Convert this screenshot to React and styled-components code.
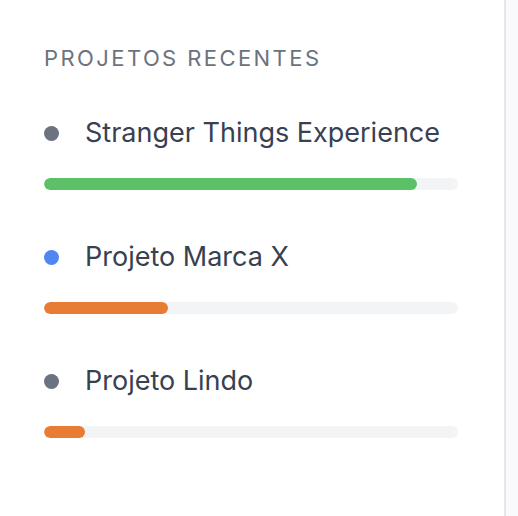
import React from 'react';
import styled, {createGlobalStyle} from 'styled-components';

const GlobalStyle = createGlobalStyle`
  html, body {
    margin: 0;
    padding: 0;
    background: #f9fafb;
  }
  body {
    font-family: Inter, "Noto Sans", sans-serif;
    -webkit-font-smoothing: antialiased;
  }
`;

const Layout = styled.div`
  display: flex;
  height: 516px;
`;

const Sidebar = styled.aside`
  width: 506px;
  box-sizing: border-box;
  padding: 43px 46px 0 44px;
  background: #fff;
  border-right: 2px solid #e5e7eb;
`;

const Heading = styled.h3`
  margin: 0;
  font-size: 22px;
  font-weight: 400;
  line-height: 30px;
  letter-spacing: 0.11em;
  color: #6b7280;
  text-transform: uppercase;
`;

const List = styled.ul`
  list-style: none;
  margin: 42px 0 0;
  padding: 0;
  display: flex;
  flex-direction: column;
  gap: 49px;
`;

const Item = styled.li`
  display: flex;
  flex-direction: column;
  gap: 27px;
`;

const Row = styled.div`
  display: flex;
  align-items: center;
  gap: 26px;
`;

const Dot = styled.span`
  width: 15px;
  height: 15px;
  border-radius: 50%;
  flex-shrink: 0;
  background: ${p => p.color};
`;

const Name = styled.span`
  font-size: 27px;
  line-height: 36px;
  color: #374151;
`;

const Track = styled.div`
  height: 12px;
  border-radius: 6px;
  background: #f3f4f6;
  overflow: hidden;
`;

const Fill = styled.div`
  height: 100%;
  border-radius: 6px;
  background: ${p => p.color};
`;

const projects = [
  {name: 'Stranger Things Experience', dot: '#6b7280', bar: '#5cc166', progress: 90},
  {name: 'Projeto Marca X', dot: '#4f86f0', bar: '#e97c35', progress: 30},
  {name: 'Projeto Lindo', dot: '#6b7280', bar: '#e97c35', progress: 10}
];

const App = () => (
  <>
    <GlobalStyle/>
    <Layout>
      <Sidebar>
        <Heading>Projetos recentes</Heading>
        <List>
          {projects.map(p => (
            <Item key={p.name}>
              <Row>
                <Dot color={p.dot}/>
                <Name>{p.name}</Name>
              </Row>
              <Track>
                <Fill color={p.bar} style={{width: `${p.progress}%`}}/>
              </Track>
            </Item>
          ))}
        </List>
      </Sidebar>
    </Layout>
  </>
);

export default App;
